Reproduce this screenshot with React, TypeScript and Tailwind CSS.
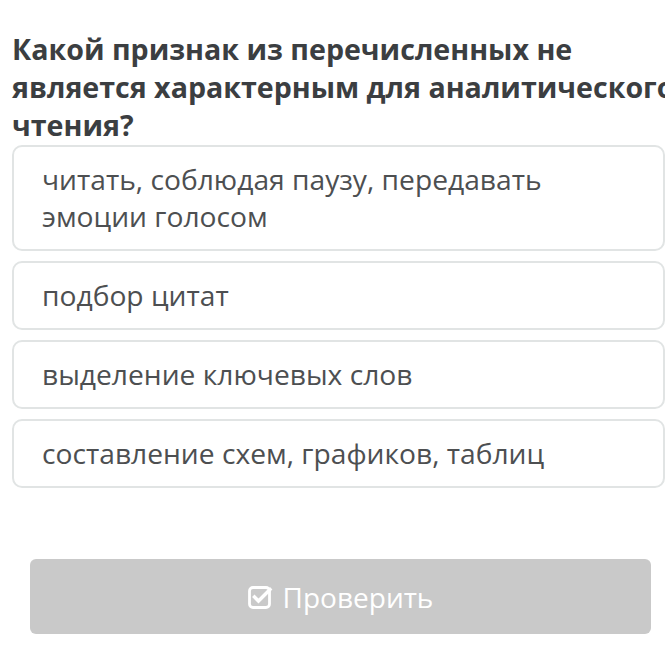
import React from 'react';

const options = [
  'читать, соблюдая паузу, передавать эмоции голосом',
  'подбор цитат',
  'выделение ключевых слов',
  'составление схем, графиков, таблиц',
];

const CheckSquare = () => (
  <svg width="25" height="25" viewBox="0 0 25 25" fill="none" className="shrink-0">
    <rect x="1.5" y="3.5" width="20" height="20" rx="3.5" stroke="white" strokeWidth="2.8" />
    <path d="M6.5 13l4 4L22 5.5" stroke="white" strokeWidth="3.4" strokeLinecap="square" />
  </svg>
);

export default function App() {
  return (
    <div className="w-[665px] h-[664px] overflow-hidden bg-white font-['Open_Sans',sans-serif]">
      <div className="pt-[30px] pl-[12px] w-[720px]">
        <h1 className="text-[28.6px] font-bold leading-[38px] text-[#3b3e41] w-[720px]">
          Какой признак из перечисленных не
          <br />
          является характерным для аналитического
          <br />
          чтения?
        </h1>
      </div>
      <div className="pl-[12px] pt-[1px] flex flex-col gap-[10px] w-[665px]">
        {options.map(o => (
          <div
            key={o}
            className="border-2 border-[#e1e4e4] rounded-[10px] px-[28px] py-[14px] text-[28.2px] leading-[37px] text-[#4d4f51]"
          >
            <div className="w-[540px]">{o}</div>
          </div>
        ))}
      </div>
      <div className="px-[30px] pt-[71px] w-[681px]">
        <button className="w-full h-[75px] bg-[#c9c9c9] rounded-[6px] flex items-center justify-center gap-[10px] text-white text-[28px]">
          <CheckSquare />
          <span>Проверить</span>
        </button>
      </div>
    </div>
  );
}
